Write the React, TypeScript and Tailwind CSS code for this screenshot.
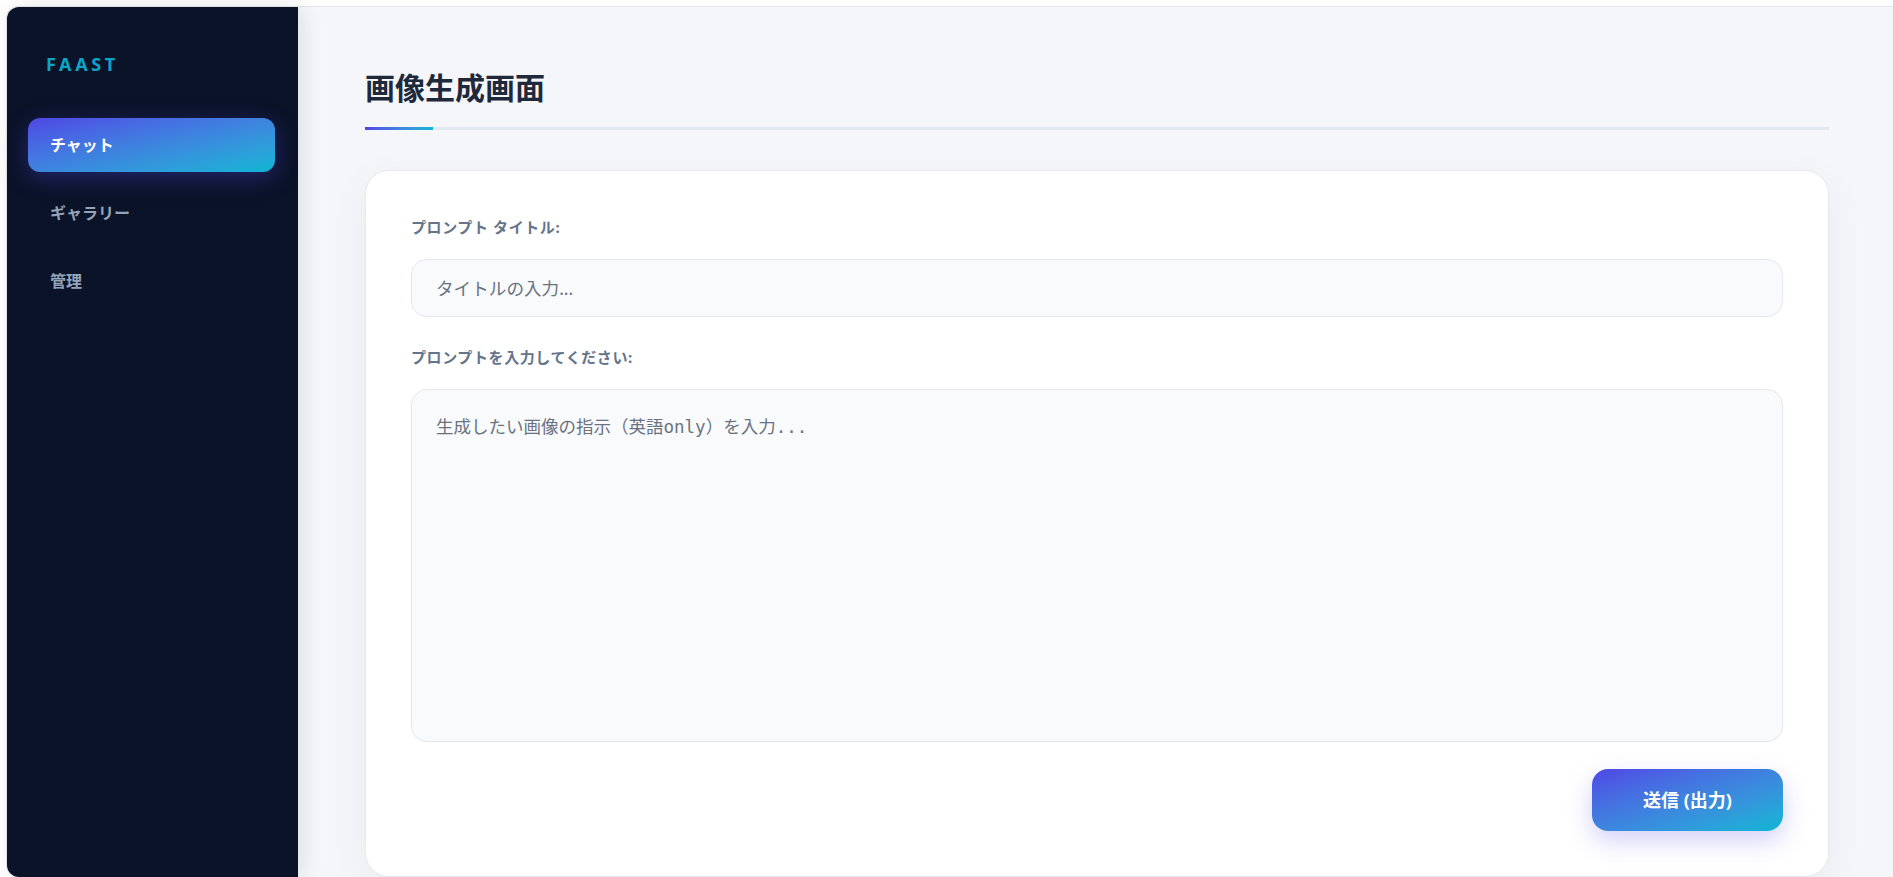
import { useState } from 'react';

const navItems = ['チャット', 'ギャラリー', '管理'];

const sans = "font-['Noto_Sans','Noto_Sans_CJK_JP',sans-serif]";

const Sidebar = ({ active, onSelect }: { active: number; onSelect: (i: number) => void }) => (
  <aside className="w-[291px] shrink-0 bg-[#0b1329] pl-[21px] pr-[23px] pt-[43px] rounded-tl-[12px] rounded-bl-[12px] shadow-[4px_0_22px_rgba(15,23,42,0.10)] z-10">
    <div className="pl-[18px] mb-[40px] text-[18px] leading-7 font-bold tracking-[0.2em] text-[#0ba5c7]">
      FAAST
    </div>
    <nav className="flex flex-col gap-[14px]">
      {navItems.map((label, i) => (
        <button
          key={label}
          onClick={() => onSelect(i)}
          className={
            i === active
              ? 'h-[54px] rounded-[12px] pl-[22px] text-left text-[16px] font-bold text-white bg-linear-to-br from-[#4f46e5] to-[#06b6d4] shadow-[0_6px_22px_rgba(79,70,229,0.35)]'
              : 'h-[54px] rounded-[12px] pl-[22px] text-left text-[16px] font-bold text-[#94a3b8] hover:text-white'
          }
        >
          {label}
        </button>
      ))}
    </nav>
  </aside>
);

const App = () => {
  const [active, setActive] = useState(0);
  const [title, setTitle] = useState('');
  const [prompt, setPrompt] = useState('');

  return (
    <div className={`h-screen overflow-hidden bg-white pt-[6px] pl-[6px] ${sans}`}>
      <div className="flex h-full border-t border-l border-[#e5e7eb] rounded-tl-[12px] rounded-bl-[12px]">
        <Sidebar active={active} onSelect={setActive} />

        <main className="flex-1 bg-[#f4f6f9] pl-[67px] pr-[64px] pt-[63px] overflow-hidden">
          <div className="mb-[40px]">
            <h1 className="text-[30px] leading-9 font-bold text-[#1e293b] pb-[21px]">画像生成画面</h1>
            <div className="h-[3px] bg-[#e2e8f0]">
              <div className="h-full w-[68px] bg-linear-to-r from-[#4f46e5] to-[#06b6d4]" />
            </div>
          </div>

          <form
            onSubmit={(e) => e.preventDefault()}
            className="bg-white border border-[#e5e9f0] rounded-[24px] px-[45px] pt-[46px] pb-[45px] shadow-[0_10px_40px_rgba(15,23,42,0.05)]"
          >
            <label className="block text-[15px] leading-5 font-bold text-[#64748b] tracking-[0.04em] mb-[22px]">
              プロンプト タイトル:
            </label>
            <input
              type="text"
              value={title}
              onChange={(e) => setTitle(e.target.value)}
              placeholder="タイトルの入力..."
              className="block w-full h-[58px] px-6 rounded-2xl border border-[#e2e8f0] bg-[#f8fafc] text-[17.6px] text-[#1e293b] placeholder:text-[#6b7280] outline-none"
            />

            <label className="block mt-[30px] text-[15px] leading-5 font-bold text-[#64748b] tracking-[0.04em] mb-[22px]">
              プロンプトを入力してください:
            </label>
            <textarea
              value={prompt}
              onChange={(e) => setPrompt(e.target.value)}
              placeholder="生成したい画像の指示（英語only）を入力..."
              className="block w-full h-[353px] p-6 rounded-2xl border border-[#e2e8f0] bg-[#f8fafc] text-[17.5px] leading-[26px] text-[#1e293b] placeholder:text-[#6b7280] outline-none resize-none font-['DejaVu_Sans_Mono','Noto_Sans_CJK_JP',monospace]"
            />

            <div className="flex justify-end mt-[27px]">
              <button
                type="submit"
                className="h-[62px] w-[191px] rounded-2xl text-[18px] font-bold text-white bg-linear-to-br from-[#4f46e5] to-[#06b6d4] shadow-[0_10px_25px_rgba(79,70,229,0.25)]"
              >
                送信 (出力)
              </button>
            </div>
          </form>
        </main>
      </div>
    </div>
  );
};

export default App;
